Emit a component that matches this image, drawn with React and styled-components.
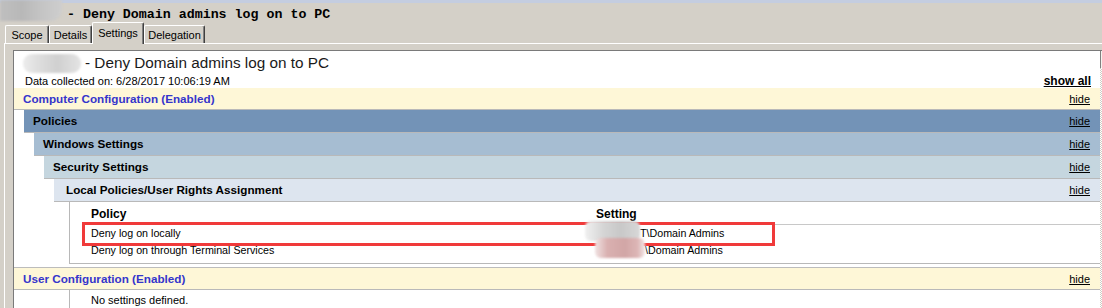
import React from "react";
import styled, { createGlobalStyle } from "styled-components";

const GlobalStyle = createGlobalStyle`
  html, body {
    margin: 0;
    padding: 0;
    background: #d4d0c8;
  }
  body {
    width: 1102px;
    height: 308px;
    overflow: hidden;
    font-family: "Liberation Sans", Arial, sans-serif;
  }
`;

const headColors = ["#fef7d7", "#7393b7", "#a6bdd2", "#c5d6df", "#dde5ef"];

const tabs = [
  { label: "Scope", width: 44 },
  { label: "Details", width: 43 },
  { label: "Settings", width: 52, active: true },
  { label: "Delegation", width: 61 },
];

const App = () => {
  return (
    <>
      <GlobalStyle />
      <Window>
        <TitleBar>
          <TopSmudge />
          <WinTitle>- Deny Domain admins log on to PC</WinTitle>
        </TitleBar>
        <TabStrip>
          {tabs.map((t) => (
            <Tab key={t.label} $w={t.width} $active={t.active}>
              {t.label}
            </Tab>
          ))}
        </TabStrip>
        <TabPanel>
          <Report>
            <Content>
              <TitleRow>
                <NameSmudge />
                <span>- Deny Domain admins log on to PC</span>
              </TitleRow>
              <DataRow>
                <span>Data collected on: 6/28/2017 10:06:19 AM</span>
                <ShowAll>show all</ShowAll>
              </DataRow>

              <Section title="Computer Configuration (Enabled)" level={0}>
                <Section title="Policies" level={1}>
                  <Section title="Windows Settings" level={2}>
                    <Section title="Security Settings" level={3}>
                      <Section title="Local Policies/User Rights Assignment" level={4} leaf>
                        <PolicyBox>
                          <Grid>
                            <HeadCell>Policy</HeadCell>
                            <HeadCell>Setting</HeadCell>
                            <Cell>Deny log on locally</Cell>
                            <Cell>
                              <Redact $shift={-11} $w={55} />T\Domain Admins
                            </Cell>
                            <Cell>Deny log on through Terminal Services</Cell>
                            <Cell>
                              <Redact $shift={-1} $w={50} $pink />\Domain Admins
                            </Cell>
                          </Grid>
                          <Highlight />
                        </PolicyBox>
                      </Section>
                    </Section>
                  </Section>
                </Section>
              </Section>

              <Section title="User Configuration (Enabled)" level={0} gap>
                <EmptyBox>No settings defined.</EmptyBox>
              </Section>
            </Content>
            <ScrollBar>
              <ScrollButton />
              <ScrollTrack />
            </ScrollBar>
          </Report>
        </TabPanel>
      </Window>
    </>
  );
};

const Section = ({ title, level, gap, leaf, children }) => (
  <Block $gap={gap}>
    <Head $level={level} $gap={gap}>
      <span>{title}</span>
      <Hide>hide</Hide>
    </Head>
    {leaf ? children : <Body>{children}</Body>}
  </Block>
);

const Window = styled.div`
  width: 1102px;
  height: 308px;
  display: flex;
  flex-direction: column;
  background: #d4d0c8;
  overflow: hidden;
`;

const TitleBar = styled.div`
  height: 19px;
  border-top: 3px solid #c4cde0;
  display: flex;
  align-items: flex-start;
`;

const TopSmudge = styled.span`
  display: block;
  width: 62px;
  height: 21px;
  margin-top: -3px;
  border-radius: 0 0 12px 0;
  background: linear-gradient(90deg, #bfbfbf, #b8b8b8 35%, #c4c4c4 65%, #cecece);
  filter: blur(1px);
`;

const WinTitle = styled.span`
  margin-left: 5px;
  padding-top: 4px;
  font-family: "Liberation Mono", "Courier New", monospace;
  font-weight: bold;
  font-size: 13.3px;
  line-height: 15px;
  color: #000;
  white-space: pre;
`;

const TabStrip = styled.div`
  height: 21px;
  display: flex;
  align-items: flex-end;
  padding-left: 5px;
  position: relative;
  z-index: 1;
`;

const Tab = styled.div`
  box-sizing: border-box;
  width: ${(p) => p.$w}px;
  height: ${(p) => (p.$active ? 22 : 18)}px;
  margin-bottom: ${(p) => (p.$active ? -1 : 0)}px;
  padding-top: ${(p) => (p.$active ? 2 : 1)}px;
  border-top: 1px solid #fff;
  border-left: 1px solid #fff;
  border-right: 1px solid #404040;
  box-shadow: inset -1px 0 #808080;
  border-radius: 2px 2px 0 0;
  background: #d4d0c8;
  font-size: 11px;
  line-height: 16px;
  text-align: center;
  color: #000;
`;

const TabPanel = styled.div`
  flex: 1;
  min-height: 0;
  margin-left: 4px;
  border-top: 1px solid #fff;
  border-left: 1px solid #fff;
  padding: 6px 0 0 8px;
  display: flex;
  flex-direction: column;
`;

const Report = styled.div`
  flex: 1;
  min-height: 0;
  display: flex;
  background: #fff;
  border-left: 1px solid #7a7a7a;
  border-top: 1px solid #7a7a7a;
  overflow: hidden;
`;

const Content = styled.div`
  flex: 1;
  min-width: 0;
  display: flex;
  flex-direction: column;
  color: #000;
`;

const ScrollBar = styled.div`
  width: 2px;
  display: flex;
  flex-direction: column;
`;

const ScrollButton = styled.div`
  height: 17px;
  border-left: 1px solid #808080;
  background: #f4f3ee;
`;

const ScrollTrack = styled.div`
  flex: 1;
  background-image: repeating-conic-gradient(#ffffff 0 25%, #cfccc4 0 50%);
  background-size: 2px 2px;
`;

const TitleRow = styled.div`
  height: 20px;
  padding: 2px 0 0 9px;
  display: flex;
  align-items: center;
  font-size: 15.3px;
  line-height: 20px;
  color: #1a1a1a;
  white-space: pre;
`;

const NameSmudge = styled.span`
  display: block;
  width: 58px;
  height: 19px;
  margin-right: 4px;
  border-radius: 9px;
  background: linear-gradient(90deg, #ececec, #dcdcdc 30%, #d0d0d0 60%, #e4e4e4);
  filter: blur(1px);
`;

const DataRow = styled.div`
  height: 13px;
  padding: 2px 9px 0 11px;
  display: flex;
  justify-content: space-between;
  align-items: baseline;
  font-size: 11px;
  line-height: 13px;
`;

const ShowAll = styled.span`
  font-size: 12px;
  font-weight: bold;
  text-decoration: underline;
`;

const Block = styled.div`
  margin-top: ${(p) => (p.$gap ? 3 : 0)}px;
`;

const Head = styled.div`
  height: ${(p) => (p.$level === 0 ? 21 : 22)}px;
  padding: 0 10px 0 ${(p) => (p.$level === 4 ? 12 : 9)}px;
  display: flex;
  justify-content: space-between;
  align-items: baseline;
  background: ${(p) => headColors[p.$level]};
  border-top: ${(p) => (p.$gap ? "1px solid #bcbcbc" : "none")};
  border-bottom: 1px solid #b9b9b9;
  font-size: 11.7px;
  font-weight: bold;
  line-height: ${(p) => (p.$level === 0 ? 21 : 22)}px;
  color: ${(p) => (p.$level === 0 ? "#3535cc" : "#000")};
`;

const Hide = styled.span`
  font-size: 11px;
  font-weight: normal;
  text-decoration: underline;
  color: #000;
`;

const Body = styled.div`
  margin-left: 10px;
`;

const PolicyBox = styled.div`
  position: relative;
  margin-left: 15px;
  padding: 0 0 4px 12px;
  border-left: 1px solid #b8b8b8;
  border-bottom: 1px solid #b8b8b8;
`;

const Grid = styled.div`
  display: grid;
  grid-template-columns: 505px 1fr;
`;

const HeadCell = styled.div`
  padding: 4px 0 1px 9px;
  border-bottom: 1px solid #c8c8c8;
  font-size: 12px;
  font-weight: bold;
  line-height: 17px;
`;

const Cell = styled.div`
  padding-left: 9px;
  font-size: 10.7px;
  line-height: 17px;
  white-space: pre;
`;

const Redact = styled.span`
  position: relative;
  z-index: 2;
  display: inline-block;
  vertical-align: top;
  width: ${(p) => p.$w}px;
  height: 20px;
  margin: -4px 0 -4px ${(p) => p.$shift}px;
  border-radius: 6px;
  background: ${(p) =>
    p.$pink
      ? "linear-gradient(90deg, #f0e2e2, #d9b0b0 25%, #d2a6a6 60%, #ddb6b6 85%, #f2e6e6)"
      : "linear-gradient(90deg, #f0f0f0, #d4d4d4 35%, #c8c8c8 65%, #d8d8d8)"};
  filter: blur(1px);
`;

const Highlight = styled.div`
  position: absolute;
  z-index: 1;
  left: 12px;
  top: 20px;
  width: 693px;
  height: 24px;
  box-sizing: border-box;
  border: 3px solid #f03a3a;
  pointer-events: none;
`;

const EmptyBox = styled.div`
  margin-left: 45px;
  padding: 4px 0 0 21px;
  border-left: 1px solid #b8b8b8;
  font-size: 11px;
  line-height: 13px;
  height: 40px;
`;

export default App;
